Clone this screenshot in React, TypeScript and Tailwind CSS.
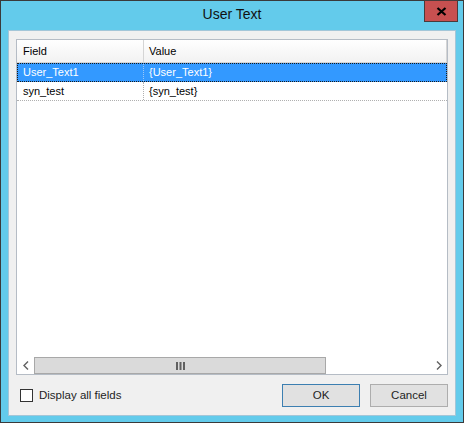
import React from 'react';

const font = { fontFamily: '"Liberation Sans", Arial, sans-serif' };

const rows = [
  { field: 'User_Text1', value: '{User_Text1}' },
  { field: 'syn_test', value: '{syn_test}' },
];

const ScrollArrow: React.FC<{ dir: 'left' | 'right' }> = ({ dir }) => (
  <div className="flex h-full w-[17px] items-center justify-center bg-white">
    <svg width="6" height="9" viewBox="0 0 6 9">
      <path
        d={dir === 'left' ? 'M5 0.5 L1 4.5 L5 8.5' : 'M1 0.5 L5 4.5 L1 8.5'}
        fill="none"
        stroke="#606060"
        strokeWidth="1.4"
      />
    </svg>
  </div>
);

const App: React.FC = () => {
  const selected = 0;

  return (
    <div
      className="relative flex h-[423px] w-[464px] flex-col border border-[#3a3a3a] bg-[#63cbeb]"
      style={font}
    >
      {/* title bar */}
      <div className="flex h-[29px] items-center justify-center pb-[2px] text-[14px] text-[#111]">
        User Text
      </div>
      <button className="absolute left-[423px] top-[-1px] flex h-[22px] w-[34px] items-center justify-center border border-[#4a3a3a] bg-[#c75050]">
        <svg width="11" height="9" viewBox="0 0 11 9">
          <path d="M1.5 1 L9.5 8 M9.5 1 L1.5 8" stroke="#000" strokeWidth="2.2" />
        </svg>
      </button>

      {/* client area */}
      <div className="mx-[7px] mb-[6px] flex flex-1 flex-col border border-[#a3c6d8] bg-[#f0f0f0] px-[7px] pt-[8px] pb-[8px]">
        {/* list view */}
        <div className="flex flex-1 flex-col border border-[#b5bcc5] bg-white text-[11px] text-black">
          <div className="flex h-[23px] border-b border-[#d5d5d5] bg-gradient-to-b from-white to-[#f2f2f2]">
            <div className="flex w-[127px] items-center border-r border-[#d5d5d5] pl-[6px]">Field</div>
            <div className="flex flex-1 items-center border-r border-[#d5d5d5] pl-[5px]">Value</div>
          </div>
          {rows.map((r, i) =>
            i === selected ? (
              <div
                key={r.field}
                className="flex h-[19px] border border-dotted border-[#1a1a1a] bg-[#3399ff] text-white"
              >
                <div className="flex w-[126px] items-center border-r border-dotted border-[#9cc7f5] pl-[5px]">
                  {r.field}
                </div>
                <div className="flex flex-1 items-center pl-[5px]">{r.value}</div>
              </div>
            ) : (
              <div key={r.field} className="flex h-[19px] border-b border-dotted border-[#b0b0b0]">
                <div className="flex w-[127px] items-center border-r border-dotted border-[#b0b0b0] pl-[6px]">
                  {r.field}
                </div>
                <div className="flex flex-1 items-center pl-[5px]">{r.value}</div>
              </div>
            ),
          )}
          <div className="flex-1" />
          {/* horizontal scroll bar */}
          <div className="flex h-[17px]">
            <ScrollArrow dir="left" />
            <div className="flex w-[292px] items-center justify-center border border-[#a8a8a8] bg-[#dadada]">
              <svg width="9" height="8" viewBox="0 0 9 8">
                <rect x="0" y="0" width="2" height="8" fill="#606060" />
                <rect x="3.5" y="0" width="2" height="8" fill="#606060" />
                <rect x="7" y="0" width="2" height="8" fill="#606060" />
              </svg>
            </div>
            <div className="flex-1 bg-white" />
            <ScrollArrow dir="right" />
          </div>
        </div>

        {/* footer */}
        <div className="mt-[9px] flex h-[23px] items-center text-[11.5px] text-[#1e1e1e]">
          <label className="ml-[4px] flex items-center gap-[6px]">
            <span className="h-[13px] w-[13px] border border-[#333] bg-white" />
            Display all fields
          </label>
          <div className="ml-auto flex gap-[10px]">
            <button className="h-[23px] w-[78px] border border-[#3c7fb1] bg-[#e1e1e1] text-[11.5px]">
              OK
            </button>
            <button className="h-[23px] w-[78px] border border-[#adadad] bg-[#e1e1e1] text-[11.5px]">
              Cancel
            </button>
          </div>
        </div>
      </div>
    </div>
  );
};

export default App;
